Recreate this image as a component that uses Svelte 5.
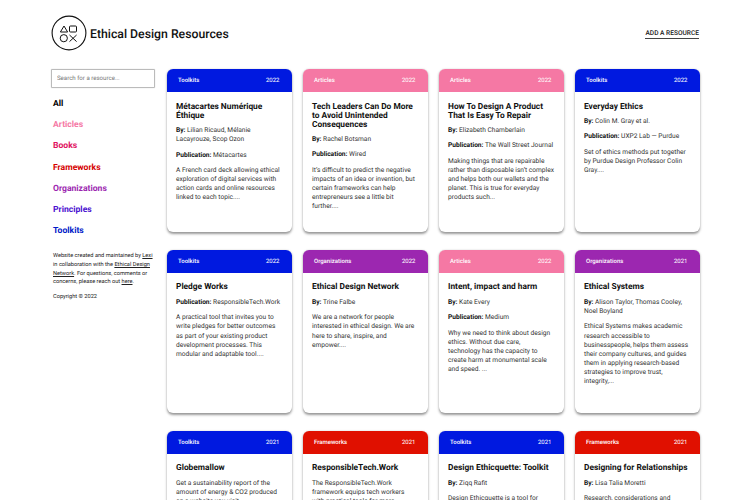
<script>
  const colors = { Toolkits: '#0019e0', Articles: '#f578a4', Organizations: '#9c27b0', Frameworks: '#e01000' };
  const nav = [
    ['All', '#000'], ['Articles', '#f578a4'], ['Books', '#e0115f'], ['Frameworks', '#d50000'],
    ['Organizations', '#9c27b0'], ['Principles', '#4a0fd0'], ['Toolkits', '#0019c8']
  ];
  const cards = [
    { c: 'Toolkits', y: 2022, t: 'Métacartes Numérique Éthique', by: 'Lilian Ricaud, Mélanie Lacayrouze, Scop Ozon', pub: 'Métacartes', d: 'A French card deck allowing ethical exploration of digital services with action cards and online resources linked to each topic....' },
    { c: 'Articles', y: 2022, t: 'Tech Leaders Can Do More to Avoid Unintended Consequences', by: 'Rachel Botsman', pub: 'Wired', d: 'It’s difficult to predict the negative impacts of an idea or invention, but certain frameworks can help entrepreneurs see a little bit further....' },
    { c: 'Articles', y: 2022, t: 'How To Design A Product That Is Easy To Repair', by: 'Elizabeth Chamberlain', pub: 'The Wall Street Journal', d: 'Making things that are repairable rather than disposable isn’t complex and helps both our wallets and the planet. This is true for everyday products such...' },
    { c: 'Toolkits', y: 2022, t: 'Everyday Ethics', by: 'Colin M. Gray et al.', pub: 'UXP2 Lab — Purdue', d: 'Set of ethics methods put together by Purdue Design Professor Colin Gray....' },
    { c: 'Toolkits', y: 2022, t: 'Pledge Works', pub: 'ResponsibleTech.Work', d: 'A practical tool that invites you to write pledges for better outcomes as part of your existing product development processes. This modular and adaptable tool....' },
    { c: 'Organizations', y: 2022, t: 'Ethical Design Network', by: 'Trine Falbe', d: 'We are a network for people interested in ethical design. We are here to share, inspire, and empower....' },
    { c: 'Articles', y: 2022, t: 'Intent, impact and harm', by: 'Kate Every', pub: 'Medium', d: 'Why we need to think about design ethics. Without due care, technology has the capacity to create harm at monumental scale and speed. ...' },
    { c: 'Organizations', y: 2021, t: 'Ethical Systems', by: 'Alison Taylor, Thomas Cooley, Noel Boyland', d: 'Ethical Systems makes academic research accessible to businesspeople, helps them assess their company cultures, and guides them in applying research-based strategies to improve trust, integrity,...' },
    { c: 'Toolkits', y: 2021, t: 'Globemallow', d: 'Get a sustainability report of the amount of energy & CO2 produced on a website you visit....' },
    { c: 'Frameworks', y: 2021, t: 'ResponsibleTech.Work', d: 'The ResponsibleTech.Work framework equips tech workers with practical tools for more responsible product development....' },
    { c: 'Toolkits', y: 2021, t: 'Design Ethicquette: Toolkit', by: 'Ziqq Rafit', d: 'Design Ethicquette is a tool for designers who want to work more ethically....' },
    { c: 'Frameworks', y: 2021, t: 'Designing for Relationships', by: 'Lisa Talia Moretti', d: 'Research, considerations and prompts for designing relationships with technology....' }
  ];
</script>

<div class="page">
  <header class="top">
    <div class="brand">
      <svg class="logo" width="36" height="36" viewBox="0 0 36 36" fill="none" stroke="#111" stroke-width="1">
        <circle cx="18" cy="18" r="16.9" stroke-width="1.1" />
        <path d="M13 11 L9.4 17 H16.6 Z" />
        <rect x="18.5" y="11" width="7" height="6" rx="1" />
        <circle cx="12.8" cy="23.2" r="3.6" />
        <path d="M18.5 20 L25.6 26.6 M25.6 20 L18.5 26.6" />
      </svg>
      <h1>Ethical Design Resources</h1>
    </div>
    <a class="add" href="#add">ADD A RESOURCE</a>
  </header>

  <div class="body">
    <aside>
      <input class="search" placeholder="Search for a resource..." />
      <nav>
        {#each nav as [label, color]}
          <a href="#f" style:color={color}>{label}</a>
        {/each}
      </nav>
      <p class="foot">Website created and maintained by <u>Lexi</u> in collaboration with the <u>Ethical Design Network</u>. For questions, comments or concerns, please reach out <u>here</u>.</p>
      <p class="foot copy">Copyright © 2022</p>
    </aside>

    <main class="grid">
      {#each cards as card}
        <article class="card">
          <div class="head" style:background={colors[card.c]}>
            <span class="cat">{card.c}</span><span>{card.y}</span>
          </div>
          <div class="content">
            <h2>{card.t}</h2>
            {#if card.by}<p><b>By:</b> {card.by}</p>{/if}
            {#if card.pub}<p><b>Publication:</b> {card.pub}</p>{/if}
            <p>{card.d}</p>
          </div>
        </article>
      {/each}
    </main>
  </div>
</div>

<style>
  :global(body) { margin: 0; background: #fff; font-family: Roboto, "Liberation Sans", sans-serif; color: #222; text-rendering: geometricPrecision; }
  :global(html), :global(body) { height: 500px; overflow: hidden; }
  .page { width: 750px; height: 500px; overflow: hidden; padding: 15px 51px 0; box-sizing: border-box; }
  .top { display: flex; justify-content: space-between; align-items: center; height: 36px; }
  .brand { display: flex; align-items: center; gap: 3px; }
  .logo { display: block; }
  h1 { margin: 1px 0 0; font-size: 12.25px; font-weight: 500; color: #111; }
  .add { font-size: 6.6px; font-weight: 500; color: #222; text-decoration: none; border-bottom: 1px solid #444; padding-bottom: 1px; margin-top: 2px; }
  .body { display: flex; gap: 12px; margin-top: 18px; }
  aside { width: 104px; flex: none; }
  .search { display: block; width: 104px; height: 19px; box-sizing: border-box; border: 1px solid #bbb; border-radius: 1px; padding: 0 5px; font: 400 6.1px Roboto, sans-serif; text-rendering: geometricPrecision; box-shadow: 0 0 1px #bbb; outline: none; }
  .search::placeholder { color: #777; }
  nav { display: flex; flex-direction: column; gap: 10.4px; margin: 11px 0 0 2px; }
  nav a { font-size: 8.6px; line-height: 10.8px; font-weight: 700; text-decoration: none; }
  .foot { margin: 15px 0 0 2px; font-size: 5.65px; line-height: 8.8px; color: #222; }
  .copy { margin-top: 5.5px; }
  .grid { display: grid; grid-template-columns: repeat(4, 124.5px); column-gap: 11.5px; row-gap: 18.2px; grid-auto-rows: 162.8px; }
  .card { border-radius: 6px; background: #fff; box-shadow: 0 1.5px 2.5px rgba(0,0,0,.4), 0 0 1px rgba(0,0,0,.12); overflow: hidden; }
  .head { height: 23px; display: flex; justify-content: space-between; align-items: center; padding: 0 12px 0 11px; color: #fff; font-size: 6px; }
  .cat { font-weight: 500; }
  .content { padding: 10.5px 9.5px 0 9px; }
  h2 { margin: 0 0 -1.2px; font-size: 8.35px; line-height: 9px; font-weight: 700; color: #111; }
  p { margin: 6.5px 0 0; font-size: 6.62px; line-height: 9.1px; color: #333; }
  p b { font-weight: 700; color: #111; }
</style>
